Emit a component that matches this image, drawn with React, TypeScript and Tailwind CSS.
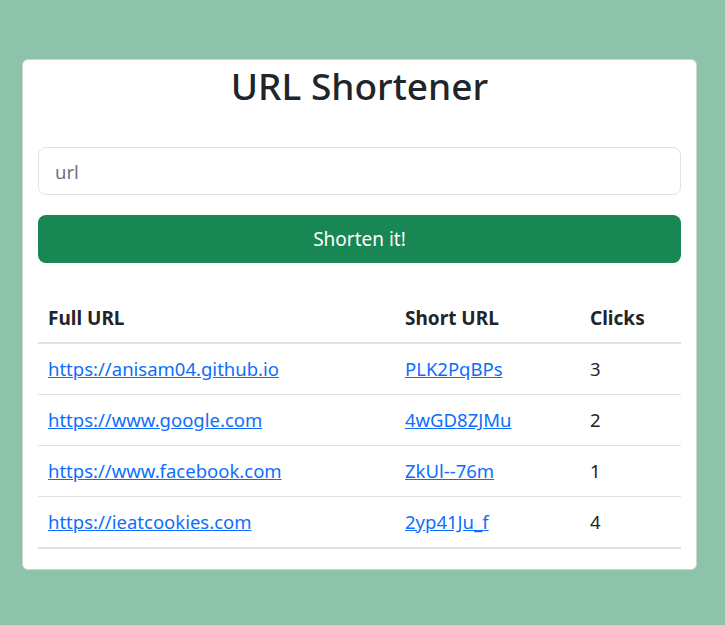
const ROWS = [
  { full: "https://anisam04.github.io", short: "PLK2PqBPs", clicks: 3 },
  { full: "https://www.google.com", short: "4wGD8ZJMu", clicks: 2 },
  { full: "https://www.facebook.com", short: "ZkUl--76m", clicks: 1 },
  { full: "https://ieatcookies.com", short: "2yp41Ju_f", clicks: 4 },
];

export default function App() {
  return (
    <div
      className="min-h-screen bg-[#8cc3aa] pt-[59px] pl-[22px] text-[#212529]"
      style={{ fontFamily: '"Noto Sans", "Segoe UI", sans-serif' }}
    >
      <div className="w-[675px] rounded-md border border-[#d0d4d2] bg-white px-[15px] pt-[2px] pb-[20px]">
        <h1 className="text-center text-[37px] leading-[48px] font-medium">URL Shortener</h1>

        <form className="mt-[37px]" onSubmit={(e) => e.preventDefault()}>
          <input
            type="text"
            placeholder="url"
            className="block h-[48px] w-full rounded-lg border border-[#dee2e6] px-4 text-[18.5px] outline-none placeholder:text-[#6c757d]"
          />
          <button
            type="submit"
            className="mt-[20px] block h-[48px] w-full rounded-lg bg-[#198754] text-[19px] text-white"
          >
            Shorten it!
          </button>
        </form>

        <table className="mt-[31px] w-full border-collapse text-[18.5px] leading-6">
          <thead>
            <tr className="border-b-2 border-[#dee2e6] text-[19px]">
              <th className="w-[357px] px-[10px] py-[12px] text-left font-bold">Full URL</th>
              <th className="w-[185px] px-[10px] py-[12px] text-left font-bold">Short URL</th>
              <th className="px-[10px] py-[12px] text-left font-bold">Clicks</th>
            </tr>
          </thead>
          <tbody>
            {ROWS.map((r, i) => (
              <tr
                key={r.short}
                className={i === ROWS.length - 1 ? "border-b-2 border-[#dee2e6]" : "border-b border-[#dee2e6]"}
              >
                <td className="px-[10px] py-[13px]">
                  <a href={r.full} className="text-[#0d6efd] underline">
                    {r.full}
                  </a>
                </td>
                <td className="px-[10px] py-[13px]">
                  <a href={"#" + r.short} className="text-[#0d6efd] underline">
                    {r.short}
                  </a>
                </td>
                <td className="px-[10px] py-[13px]">{r.clicks}</td>
              </tr>
            ))}
          </tbody>
        </table>
      </div>
    </div>
  );
}
